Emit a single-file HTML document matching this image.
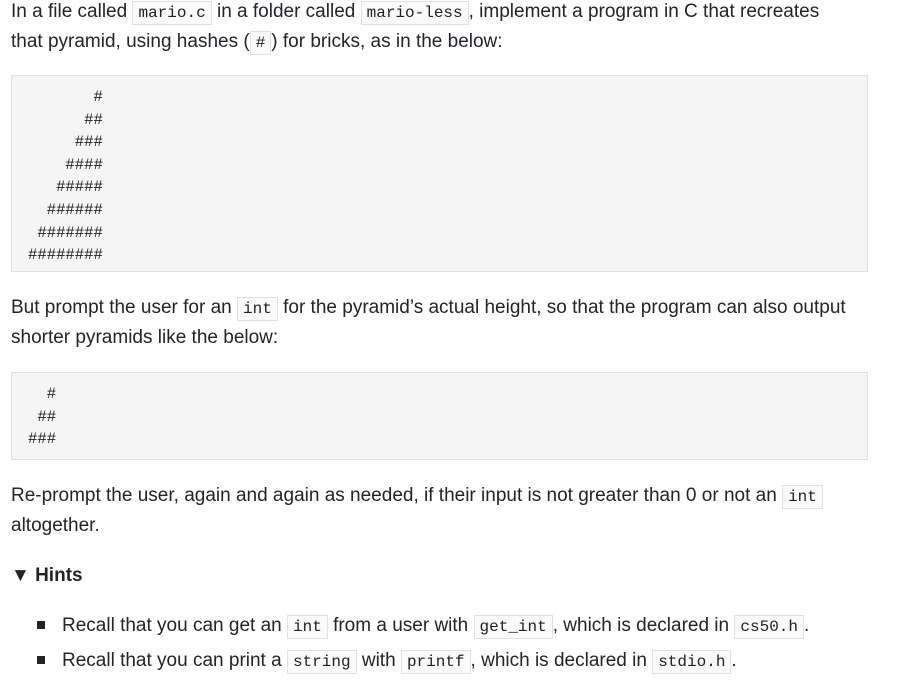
<!DOCTYPE html>
<html><head><style>
body{margin:0;background:#fff;color:#212529;font-family:"Liberation Sans",sans-serif;font-size:19px;width:900px;height:685px;overflow:hidden;position:relative}
.p{position:absolute;left:11px;line-height:30px;margin:0;white-space:nowrap}
code{font-family:"Liberation Mono",monospace;font-size:16px;border:1px solid #e1e1e1;background:#fafafa;padding:2px 5px;color:#222}
pre{position:absolute;left:11px;width:855px;margin:0;background:#f5f5f5;border:1px solid #e0e0e0;font-family:"Liberation Mono",monospace;font-size:15.6px;line-height:22.6px;color:#222}
pre span{position:absolute;left:16px;top:10px;white-space:pre}
.li{position:absolute;left:62px;line-height:30px;white-space:nowrap}
.b{position:absolute;left:37px;width:8px;height:8px;background:#212529}
</style></head><body>
<div class="p" style="top:-3px">In a file called <code>mario.c</code> in a folder called <code>mario-less</code>, implement a program in C that recreates</div>
<div class="p" style="top:27px">that pyramid, using hashes (<code>#</code>) for bricks, as in the below:</div>
<pre style="top:75px;height:195px"><span>       #
      ##
     ###
    ####
   #####
  ######
 #######
########</span></pre>
<div class="p" style="top:293px">But prompt the user for an <code>int</code> for the pyramid’s actual height, so that the program can also output</div>
<div class="p" style="top:323px">shorter pyramids like the below:</div>
<pre style="top:372px;height:86px"><span>  #
 ##
###</span></pre>
<div class="p" style="top:481px">Re-prompt the user, again and again as needed, if their input is not greater than 0 or not an <code>int</code></div>
<div class="p" style="top:511px">altogether.</div>
<div class="p" style="top:561px;font-weight:bold">▼ Hints</div>
<div class="b" style="top:621px"></div>
<div class="li" style="top:611px">Recall that you can get an <code>int</code> from a user with <code>get_int</code>, which is declared in <code>cs50.h</code>.</div>
<div class="b" style="top:656px"></div>
<div class="li" style="top:646px">Recall that you can print a <code>string</code> with <code>printf</code>, which is declared in <code>stdio.h</code>.</div>
</body></html>
